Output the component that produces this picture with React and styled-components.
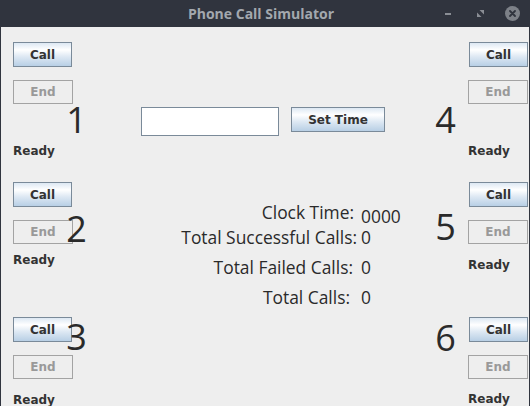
import styled, { createGlobalStyle } from 'styled-components';

const GlobalStyle = createGlobalStyle`
  html, body {
    margin: 0;
    padding: 0;
    background: #30343e;
  }
  body {
    width: 530px;
    height: 406px;
    overflow: hidden;
  }
`;

const Window = styled.div`
  width: 530px;
  height: 406px;
  display: flex;
  flex-direction: column;
  background: #30343e;
  overflow: hidden;
`;

const TitleBar = styled.div`
  flex: none;
  height: 27px;
  display: grid;
  grid-template-columns: 1fr auto 1fr;
  align-items: center;
`;

const Title = styled.div`
  grid-column: 2;
  font-family: 'Open Sans', 'DejaVu Sans', sans-serif;
  font-weight: 700;
  font-size: 14px;
  color: #a3a8ae;
  margin-right: 8px;
`;

const Controls = styled.div`
  grid-column: 3;
  justify-self: end;
  display: flex;
  align-items: center;
  padding-right: 10px;
`;

const ControlSlot = styled.div`
  width: ${(p) => p.$w}px;
  height: 16px;
  margin-left: ${(p) => p.$gap}px;
  display: flex;
  align-items: center;
  justify-content: center;
`;

const Dash = styled.div`
  width: 6px;
  height: 2px;
  background: #8a8e95;
`;

const CloseDot = styled.div`
  width: 15px;
  height: 15px;
  border-radius: 50%;
  background: #7d8188;
  display: flex;
  align-items: center;
  justify-content: center;
`;

const Body = styled.div`
  flex: 1;
  margin: 0 1px;
  padding: 0 1px 0 12px;
  background: #eeeeee;
  display: grid;
  grid-template-columns: 60px 1fr 60px;
`;

const PhoneColumn = styled.div`
  display: grid;
  grid-template-rows: 140px 135px auto;
  padding-top: 15px;
`;

const Phone = styled.div`
  position: relative;
  display: flex;
  flex-direction: column;
  align-items: flex-start;
`;

const Button = styled.button`
  box-sizing: border-box;
  width: ${(p) => p.$w}px;
  height: ${(p) => p.$h}px;
  margin: ${(p) => p.$mt || 0}px 0 0 ${(p) => p.$ml || 0}px;
  padding: 0;
  font-family: 'DejaVu Sans', 'Liberation Sans', sans-serif;
  font-weight: 700;
  font-size: 12px;
  color: #333333;
  border: 1px solid #7a8a99;
  border-radius: 0;
  background: linear-gradient(
    to bottom,
    #dde8f3 0%,
    #ffffff 30%,
    #dde8f3 60%,
    #b8cfe5 100%
  );

  &:disabled {
    color: #999999;
    border-color: #a3a3a3;
    background: #eeeeee;
  }
`;

const Status = styled.div`
  margin-top: ${(p) => p.$mt}px;
  font-family: 'DejaVu Sans', 'Liberation Sans', sans-serif;
  font-weight: 700;
  font-size: 12px;
  line-height: 14px;
  color: #333333;
`;

const PhoneNumber = styled.div`
  position: absolute;
  top: ${(p) => p.$top}px;
  left: ${(p) => p.$left}px;
  width: 21px;
  text-align: center;
  font-family: 'Open Sans', 'DejaVu Sans', sans-serif;
  font-size: 36px;
  line-height: 36px;
  color: #2a2a2a;
`;

const Center = styled.div`
  display: flex;
  flex-direction: column;
  padding-top: 80px;
`;

const TimeRow = styled.div`
  display: flex;
  align-items: flex-start;
  gap: 12px;
  padding-left: 68px;
`;

const TextField = styled.input`
  box-sizing: border-box;
  width: 138px;
  height: 29px;
  margin: 0;
  border: 1px solid #7a8a99;
  background: #ffffff;
  outline: none;
`;

const Stats = styled.div`
  margin-top: 66px;
  display: flex;
  flex-direction: column;
`;

const StatRow = styled.div`
  display: grid;
  grid-template-columns: 286px auto;
  align-items: start;
  column-gap: 2px;
  margin-top: ${(p) => p.$mt}px;
  font-family: 'Open Sans', 'DejaVu Sans', sans-serif;
  font-size: 17.4px;
  line-height: 20px;
  color: #2a2a2a;
`;

const StatLabel = styled.span`
  text-align: right;
  padding-right: ${(p) => p.$pr}px;
`;

const StatValue = styled.span`
  line-height: ${(p) => (p.$drop ? 16 : 20)}px;
  padding-top: ${(p) => (p.$drop ? p.$drop + 2 : 0)}px;
  margin-bottom: -${(p) => (p.$drop ? p.$drop - 2 : 0)}px;
`;

const leftPhones = [
  { n: 1, numTop: 60, ready: 40 },
  { n: 2, numTop: 29, ready: 9 },
  { n: 3, numTop: 2, ready: 14 },
];

const rightPhones = [
  { n: 4, numTop: 60, ready: 40 },
  { n: 5, numTop: 27, ready: 14 },
  { n: 6, numTop: 3, ready: 13 },
];

const stats = [
  { label: 'Clock Time:', value: '0000', mt: 0, pr: 5, drop: 4 },
  { label: 'Total Successful Calls:', value: '0', mt: 5, pr: 2 },
  { label: 'Total Failed Calls:', value: '0', mt: 10, pr: 6 },
  { label: 'Total Calls:', value: '0', mt: 10, pr: 9 },
];

const PhoneGroup = ({ phone, side }) => (
  <Phone>
    <Button $w={59} $h={25} $ml={side === 'right' ? 1 : 0}>
      Call
    </Button>
    <Button $w={60} $h={24} $mt={13} disabled>
      End
    </Button>
    <Status $mt={phone.ready}>Ready</Status>
    <PhoneNumber $top={phone.numTop} $left={side === 'right' ? -33 : 53}>
      {phone.n}
    </PhoneNumber>
  </Phone>
);

export default function App() {
  return (
    <>
      <GlobalStyle />
      <Window>
        <TitleBar>
          <Title>Phone Call Simulator</Title>
          <Controls>
            <ControlSlot $w={16} $gap={0}>
              <Dash />
            </ControlSlot>
            <ControlSlot $w={16} $gap={16}>
              <svg width="7" height="7" viewBox="0 0 7 7">
                <polygon points="2.5,0 7,0 7,4.5" fill="#8a8e95" />
                <polygon points="0,2.5 0,7 4.5,7" fill="#8a8e95" />
              </svg>
            </ControlSlot>
            <ControlSlot $w={15} $gap={17}>
              <CloseDot>
                <svg width="7" height="7" viewBox="0 0 7 7">
                  <path
                    d="M1 1 L6 6 M6 1 L1 6"
                    stroke="#30343e"
                    strokeWidth="1.8"
                    strokeLinecap="round"
                  />
                </svg>
              </CloseDot>
            </ControlSlot>
          </Controls>
        </TitleBar>
        <Body>
          <PhoneColumn>
            {leftPhones.map((p) => (
              <PhoneGroup key={p.n} phone={p} side="left" />
            ))}
          </PhoneColumn>
          <Center>
            <TimeRow>
              <TextField type="text" />
              <Button $w={94} $h={25}>
                Set Time
              </Button>
            </TimeRow>
            <Stats>
              {stats.map((s) => (
                <StatRow key={s.label} $mt={s.mt}>
                  <StatLabel $pr={s.pr}>{s.label}</StatLabel>
                  <StatValue $drop={s.drop}>{s.value}</StatValue>
                </StatRow>
              ))}
            </Stats>
          </Center>
          <PhoneColumn>
            {rightPhones.map((p) => (
              <PhoneGroup key={p.n} phone={p} side="right" />
            ))}
          </PhoneColumn>
        </Body>
      </Window>
    </>
  );
}
